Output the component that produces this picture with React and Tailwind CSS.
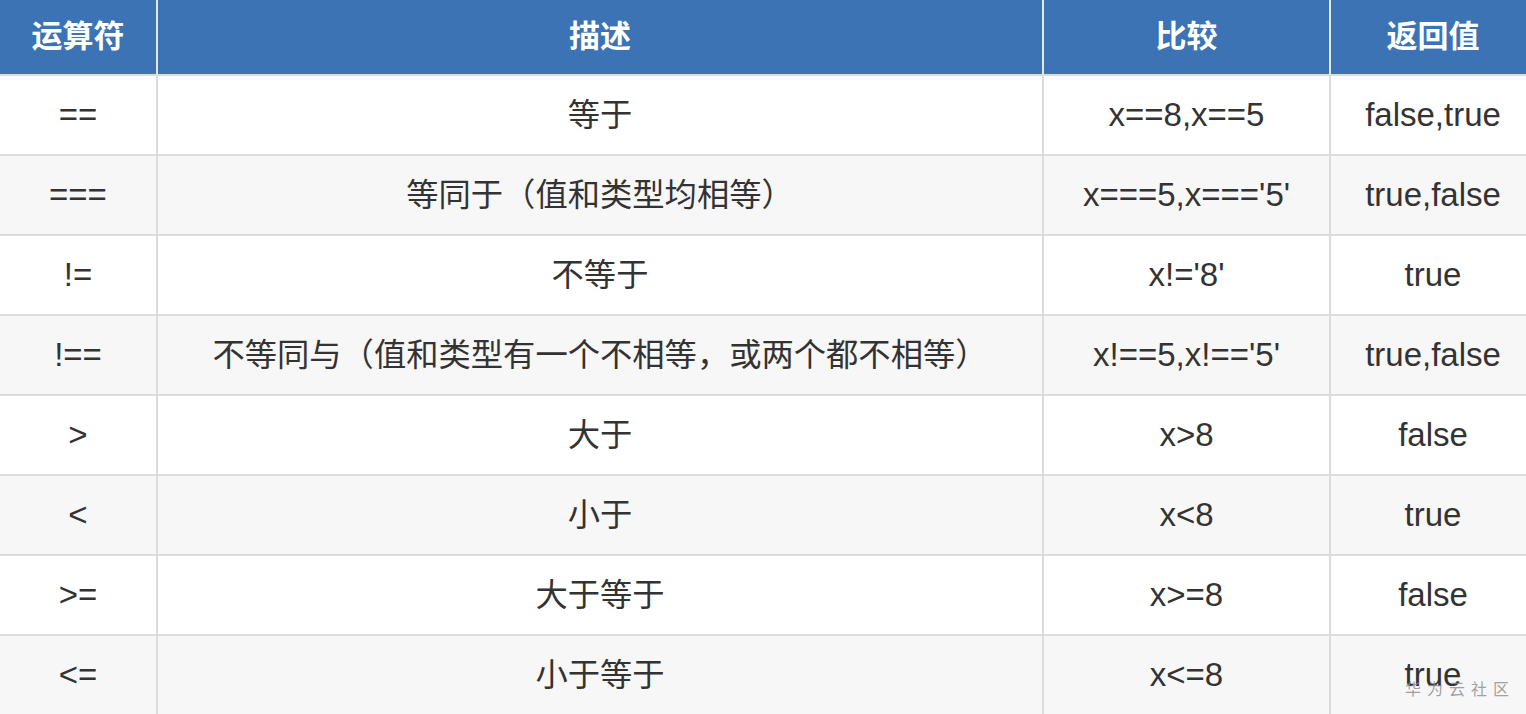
import React from "react";

const rows = [
  ["==", "等于", "x==8,x==5", "false,true"],
  ["===", "等同于（值和类型均相等）", "x===5,x==='5'", "true,false"],
  ["!=", "不等于", "x!='8'", "true"],
  ["!==", "不等同与（值和类型有一个不相等，或两个都不相等）", "x!==5,x!=='5'", "true,false"],
  [">", "大于", "x>8", "false"],
  ["<", "小于", "x<8", "true"],
  [">=", "大于等于", "x>=8", "false"],
  ["<=", "小于等于", "x<=8", "true"],
];

const headers = ["运算符", "描述", "比较", "返回值"];

export default function App() {
  return (
    <div
      className="relative w-[1526px] h-[714px] overflow-hidden bg-white text-[#333]"
      style={{ fontFamily: '"Liberation Sans", "Noto Sans CJK SC", sans-serif' }}
    >
      <div className="grid w-[1535px] grid-cols-[158px_886px_287px_204px]">
        {headers.map((h, i) => (
          <div
            key={h}
            className={`h-[76px] flex items-center justify-center bg-[#3b73b5] text-white font-bold text-[31px] border-b-2 border-b-[#dcdcdc] ${
              i < 3 ? "border-r-2 border-r-[#e6e6e6]" : ""
            }`}
          >
            {h}
          </div>
        ))}
        {rows.map((r, ri) =>
          r.map((c, ci) => (
            <div
              key={ri + "-" + ci}
              className={`h-[80px] flex items-center justify-center border-b-2 border-[#dcdcdc] ${
                ci === 1 ? "text-[32.3px]" : "text-[33px]"
              } ${ci < 3 ? "border-r-2" : ""} ${ri % 2 === 1 ? "bg-[#f7f7f7]" : "bg-white"}`}
            >
              {c}
            </div>
          ))
        )}
      </div>
      <div className="absolute left-[1405px] top-[678px] text-[16px] tracking-[6px] text-[#8a8a8a]/80">
        华为云社区
      </div>
    </div>
  );
}
